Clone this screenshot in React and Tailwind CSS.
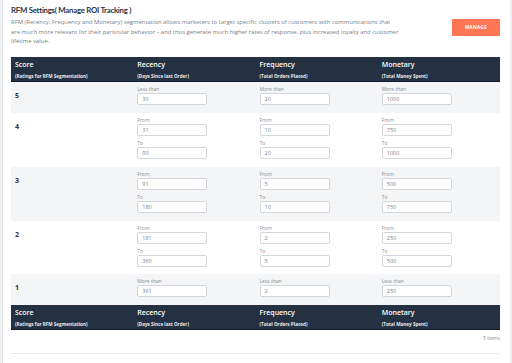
import React from "react";

const rows = [
  { score: 5, bg: "bg-[#f4f5f6]", cells: [[["Less than", "30"]], [["More than", "20"]], [["More than", "1000"]]] },
  { score: 4, bg: "bg-white", cells: [[["From", "31"], ["To", "90"]], [["From", "10"], ["To", "20"]], [["From", "750"], ["To", "1000"]]] },
  { score: 3, bg: "bg-[#f4f5f6]", cells: [[["From", "91"], ["To", "180"]], [["From", "5"], ["To", "10"]], [["From", "500"], ["To", "750"]]] },
  { score: 2, bg: "bg-white", cells: [[["From", "181"], ["To", "360"]], [["From", "2"], ["To", "5"]], [["From", "250"], ["To", "500"]]] },
  { score: 1, bg: "bg-[#f4f5f6]", cells: [[["More than", "361"]], [["Less than", "2"]], [["Less than", "250"]]] },
];

const heads = [
  ["Score", "(Ratings for RFM Segmentation)"],
  ["Recency", "(Days Since last Order)"],
  ["Frequency", "(Total Orders Placed)"],
  ["Monetary", "(Total Money Spent)"],
];

const HeadRow = () => (
  <div className="grid grid-cols-4 h-[25px] bg-[#243143] border-b border-[#131c28]">
    {heads.map(([t, s]) => (
      <div key={t} className="pl-[4px] pt-[3px] text-white">
        <div className="text-[7px] leading-[9px] font-semibold">{t}</div>
        <div className="text-[4.6px] leading-[6px] font-bold mt-[4px] text-[#e8ebef]">{s}</div>
      </div>
    ))}
  </div>
);

const Field = ({ label, value }) => (
  <div>
    <div className="text-[5px] leading-[7px] text-[#8a8f96]">{label}</div>
    <div className="w-[70px] h-[12px] bg-white border border-[#d3d6da] rounded-[2px] px-[4px] text-[5.5px] leading-[10px] text-[#7d8288]">
      {value}
    </div>
  </div>
);

export default function App() {
  return (
    <div className="flex w-[512px] h-[363px] bg-white overflow-hidden" style={{ fontFamily: "'Open Sans', 'Liberation Sans', sans-serif" }}>
      <div className="w-[3px] bg-[#eef0f2] border-r border-[#e3e6e9]" />
      <div className="flex-1 pl-[8px] pr-[10px]">
        <div className="flex justify-between items-start pt-[5px]">
          <div className="w-[389px]">
            <h1 className="text-[7.8px] leading-[11px] font-bold tracking-[-0.25px] text-[#2a3340] font-['Lato',sans-serif]">RFM Settings( Manage ROI Tracking )</h1>
            <p className="mt-[2px] text-[5.9px] leading-[9.7px] text-[#7a7f86]">
              RFM (Recency, Frequency and Monetary) segmentation allows marketers to target specific clusters of customers with communications that are much more relevant for their particular behavior – and thus generate much higher rates of response, plus increased loyalty and customer lifetime value.
            </p>
          </div>
          <button className="mt-[14px] w-[48px] h-[17px] bg-[#ff7654] text-white text-[4.6px] font-bold tracking-[0.3px] rounded-[1px]">
            MANAGE
          </button>
        </div>

        <div className="mt-[10px]">
          <HeadRow />
          {rows.map((r) => (
            <div key={r.score} className={`grid grid-cols-4 ${r.bg}`}>
              <div className="pl-[4px] pt-[10px] text-[7px] leading-[8px] font-bold text-[#2a3340]">{r.score}</div>
              {r.cells.map((c, i) => (
                <div key={i} className="pl-[4px] pt-[4px] pb-[7.8px] flex flex-col gap-[4px]">
                  {c.map(([l, v]) => (
                    <Field key={l} label={l} value={v} />
                  ))}
                </div>
              ))}
            </div>
          ))}
          <HeadRow />
        </div>

        <div className="mt-[5px] text-right text-[5px] leading-[7px] text-[#8a8f96]">5 items</div>
        <div className="mt-[11px] border-t border-[#e5e7ea]" />
      </div>
      <div className="w-[2px] bg-[#eef0f2]" />
    </div>
  );
}
